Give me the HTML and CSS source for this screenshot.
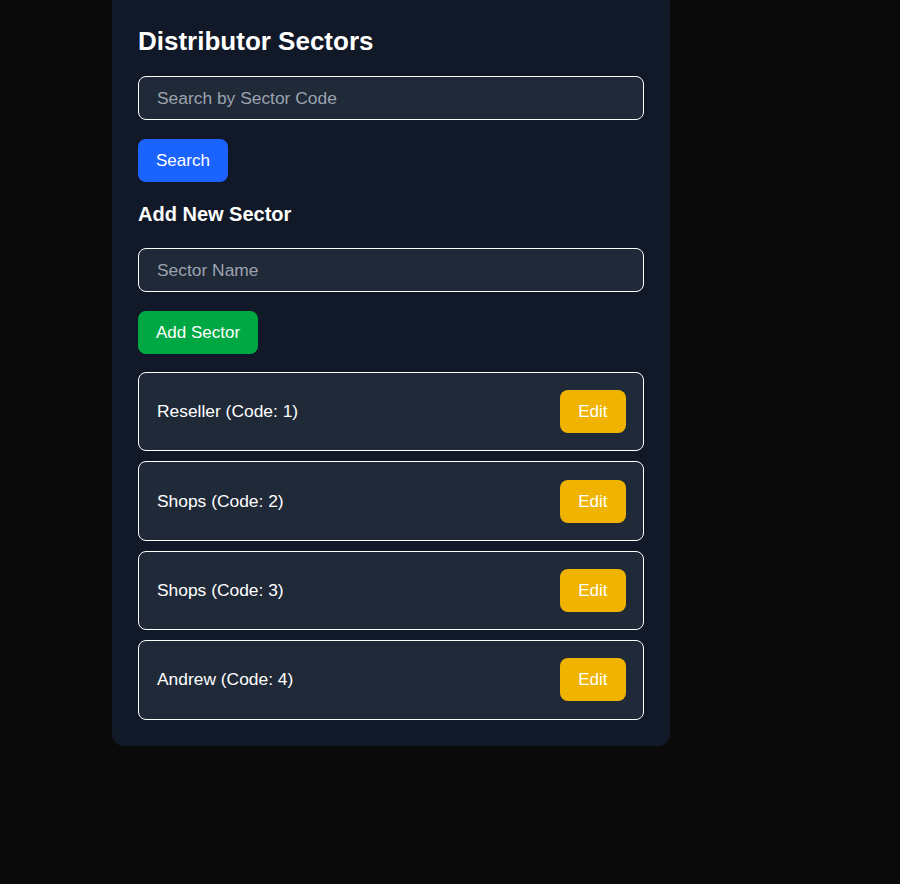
FILE: index.html
```html
<!DOCTYPE html>
<html lang="en">
<head>
<meta charset="utf-8">
<title>Distributor Sectors</title>
<link rel="stylesheet" href="styles.css">
</head>
<body>
<main class="card">
  <h2 class="title">Distributor Sectors</h2>
  <input class="field" type="text" placeholder="Search by Sector Code">
  <button class="btn btn-blue">Search</button>
  <h3 class="subtitle">Add New Sector</h3>
  <input class="field" type="text" placeholder="Sector Name">
  <button class="btn btn-green">Add Sector</button>
  <ul class="list">
    <li class="item"><span>Reseller (Code: 1)</span><button class="btn btn-yellow">Edit</button></li>
    <li class="item"><span>Shops (Code: 2)</span><button class="btn btn-yellow">Edit</button></li>
    <li class="item"><span>Shops (Code: 3)</span><button class="btn btn-yellow">Edit</button></li>
    <li class="item"><span>Andrew (Code: 4)</span><button class="btn btn-yellow">Edit</button></li>
  </ul>
</main>
</body>
</html>
```
FILE: styles.css
```css
html, body {
  margin: 0;
  padding: 0;
  background: #0a0a0a;
  font-family: "Liberation Sans", Arial, sans-serif;
  color: #ffffff;
}
.card {
  width: 558px;
  box-sizing: border-box;
  margin: 0 0 0 112px;
  padding: 26px 26px 26px 26px;
  background: #111827;
  border-radius: 0 0 12px 12px;
  display: flex;
  flex-direction: column;
  align-items: flex-start;
}
.title {
  margin: 0 0 20px 0;
  font-size: 26px;
  font-weight: 700;
  line-height: 30px;
}
.subtitle {
  margin: 21px 0 22px 0;
  font-size: 20px;
  font-weight: 700;
  line-height: 23px;
}
.field {
  width: 100%;
  box-sizing: border-box;
  height: 44px;
  padding: 0 18px;
  border: 1px solid #ffffff;
  border-radius: 8px;
  background: #1f2937;
  color: #ffffff;
  font-family: inherit;
  font-size: 17.4px;
  outline: none;
  margin: 0 0 19px 0;
}
.field::placeholder {
  color: #9ca3af;
}
.btn {
  border: none;
  border-radius: 8px;
  padding: 12px 18px;
  font-family: inherit;
  font-size: 17px;
  line-height: 19px;
  color: #ffffff;
  cursor: pointer;
}
.btn-blue { background: #1a63ff; }
.btn-green { background: #00a843; }
.btn-yellow { background: #f0b400; }
.list {
  list-style: none;
  margin: 18px 0 0 0;
  padding: 0;
  width: 100%;
  display: flex;
  flex-direction: column;
  gap: 10px;
}
.item {
  display: flex;
  align-items: center;
  justify-content: space-between;
  padding: 17.2px 17.5px 17.2px 18px;
  border: 1px solid #ffffff;
  border-radius: 8px;
  background: #1f2937;
  font-size: 17.4px;
}
```
